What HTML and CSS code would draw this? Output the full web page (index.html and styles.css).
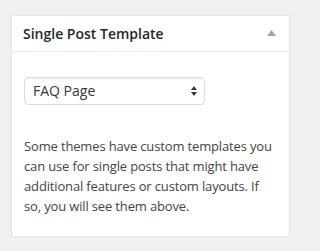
FILE: index.html
```html
<!DOCTYPE html>
<html lang="en">
<head>
<meta charset="utf-8">
<title>Single Post Template</title>
<link rel="stylesheet" href="styles.css">
</head>
<body>
<div class="postbox">
  <div class="hndle">
    <h3 class="title">Single Post Template</h3>
    <svg class="toggle" width="9" height="6" viewBox="0 0 9 6" aria-hidden="true"><polygon points="4.5,0 9,6 0,6" fill="#a0a5aa"/></svg>
  </div>
  <div class="inside">
    <div class="select-wrap">
      <select class="select">
        <option>FAQ Page</option>
      </select>
      <svg class="select-arrows" width="6" height="10" viewBox="0 0 6 10" aria-hidden="true">
        <polygon points="3,0 6,4 0,4" fill="#32373c"/>
        <polygon points="0,6 6,6 3,10" fill="#32373c"/>
      </svg>
    </div>
    <p class="desc">Some themes have custom templates you can use for single posts that might have additional features or custom layouts. If so, you will see them above.</p>
  </div>
</div>
</body>
</html>
```
FILE: styles.css
```css
html, body {
  margin: 0;
  padding: 0;
}
body {
  background: #f1f1f1;
  font-family: "Open Sans", "Noto Sans", sans-serif;
  color: #444;
  padding: 15px 0 0 11px;
}
.postbox {
  width: 277px;
  background: #fff;
  border: 1px solid #e5e5e5;
  box-shadow: 0 1px 1px rgba(0,0,0,0.04);
}
.hndle {
  display: flex;
  align-items: center;
  justify-content: space-between;
  height: 35px;
  padding: 0 13px 0 11px;
  border-bottom: 1px solid #eee;
}
.title {
  margin: 0;
  font-size: 14px;
  font-weight: 600;
  line-height: 35px;
  color: #23282d;
}
.toggle {
  display: block;
  margin-top: -2px;
}
.inside {
  padding: 25px 12px 20px 12px;
}
.select-wrap {
  position: relative;
  width: 181px;
}
.select {
  -webkit-appearance: none;
  appearance: none;
  display: block;
  width: 181px;
  height: 28px;
  margin: 0;
  padding: 0 24px 0 8px;
  border: 1px solid #ddd;
  border-radius: 4px;
  background: #fff;
  box-shadow: inset 0 1px 2px rgba(0,0,0,0.07);
  font-family: "Open Sans", "Noto Sans", sans-serif;
  font-size: 14px;
  color: #32373c;
  line-height: 26px;
}
.select-arrows {
  position: absolute;
  right: 8px;
  top: 9px;
  pointer-events: none;
}
.desc {
  margin: 31px 0 0 0;
  font-size: 13px;
  line-height: 20px;
  letter-spacing: -0.15px;
  color: #444;
}
```
